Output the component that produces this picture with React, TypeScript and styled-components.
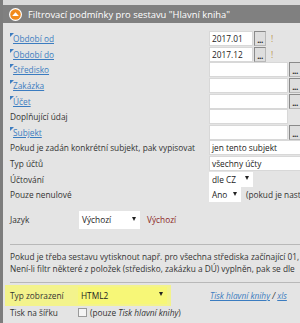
import React from "react";
import styled, { createGlobalStyle } from "styled-components";

const Global = createGlobalStyle`
  html, body { margin: 0; padding: 0; background: #e4e4e4; }
  body { font-family: "Open Sans", "DejaVu Sans", sans-serif; font-size: 8.3px; color: #333; overflow: hidden; }
`;

const Frame = styled.div`
  width: 300px;
  height: 323px;
  box-sizing: border-box;
  border-left: 3px solid #7d7d7d;
  padding-top: 5px;
  background: #e4e4e4;
  overflow: hidden;
  position: relative;
`;

const TopStrip = styled.div`
  position: absolute;
  top: 0; left: -3px; right: 0; height: 5px;
  background: #d9d9d9;
`;

const Header = styled.div`
  height: 18px;
  background: #808080;
  display: flex;
  align-items: center;
  gap: 6px;
  padding-left: 6px;
  color: #fff;
  font-size: 9.4px;
  white-space: nowrap;
`;

const Body = styled.div`
  padding: 8px 0 0 7px;
`;

const Grid = styled.div`
  display: grid;
  grid-template-columns: 199px 1fr;
  grid-auto-rows: 15.6px;
  align-items: center;
`;

const Label = styled.div`
  white-space: nowrap;
  line-height: 15px;
`;

const LinkLabel = styled.a`
  position: relative;
  color: #3b7cc0;
  text-decoration: underline;
  margin-left: 3px;
  &::before {
    content: "";
    position: absolute;
    left: -3px;
    top: 0px;
    width: 0; height: 0;
    border-top: 4px solid #3b7cc0;
    border-right: 4px solid transparent;
  }
`;

const Cell = styled.div`
  display: flex;
  align-items: center;
  gap: 1px;
  white-space: nowrap;
  height: 100%;
`;

const Input = styled.div<{ w: number }>`
  width: ${(p) => p.w}px;
  height: 15px;
  background: #fff;
  border: 1px solid #d8d8d8;
  box-sizing: border-box;
  padding-left: 2px;
  line-height: 13px;
  color: #222;
  flex: none;
`;

const Dots = styled.div`
  width: 12px;
  height: 15px;
  box-sizing: border-box;
  border: 1px solid #8a8a8a;
  border-right-color: #b8b8b8;
  border-bottom-color: #b8b8b8;
  background: #dedede;
  font-size: 8px;
  line-height: 16px;
  text-align: center;
  color: #222;
  flex: none;
  letter-spacing: -0.5px;
  font-weight: bold;
`;

const Bang = styled.span`
  color: #b9904a;
  margin-left: 4px;
`;

const Select = styled.div<{ w: number; h?: number; bg?: string }>`
  width: ${(p) => p.w}px;
  height: ${(p) => p.h ?? 15}px;
  background: ${(p) => p.bg ?? "#fff"};
  box-sizing: border-box;
  display: flex;
  align-items: center;
  justify-content: space-between;
  padding: 0 4px 0 3px;
  color: #222;
  flex: none;
  &::after {
    content: "";
    border-top: 4px solid #222;
    border-left: 2px solid transparent;
    border-right: 2px solid transparent;
    margin-top: -2px;
  }
`;

const Note = styled.span`
  margin-left: 4px;
  color: #333;
`;

const LangRow = styled.div`
  display: flex;
  align-items: center;
  margin-top: 8px;
  height: 18px;
`;

const LangLabel = styled.div`
  width: 69px;
`;

const RedText = styled.span`
  color: #8b1f1f;
  margin-left: 7px;
`;

const Spacer = styled.div`
  height: 15px;
`;

const Rule = styled.div`
  height: 1px;
  background: #b8b8b8;
`;

const Info = styled.div`
  padding: 6px 0 7px;
  line-height: 12px;
  white-space: nowrap;
`;

const TypRow = styled.div`
  display: flex;
  align-items: center;
  height: 21px;
  margin-top: 2px;
`;

const Highlight = styled.div`
  display: flex;
  align-items: center;
  background: #f3f38c;
  margin-left: -5px;
  padding-left: 5px;
  height: 21px;
  width: 166px;
  box-sizing: border-box;
`;

const TypLabel = styled.div`
  width: 68px;
  flex: none;
`;

const PrintLinks = styled.div`
  margin-left: 39px;
  color: #333;
  font-style: italic;
  white-space: nowrap;
  a { color: #3b7cc0; text-decoration: underline; }
`;

const WideRow = styled.div`
  display: flex;
  align-items: center;
  height: 14px;
  white-space: nowrap;
`;

const Check = styled.span`
  width: 9px;
  height: 9px;
  border: 1px solid #9a9a9a;
  background: #f4f4f4;
  box-sizing: border-box;
  display: inline-block;
  margin-right: 3px;
  flex: none;
`;

const HeaderIcon = () => (
  <svg width="13" height="13" viewBox="0 0 13 13">
    <circle cx="6.5" cy="6.5" r="6.5" fill="#fff" />
    <circle cx="6.5" cy="6.5" r="5.3" fill="#f28a1c" />
    <path d="M3.2 8 L6.5 4.3 L9.8 8 Z" fill="#fff" />
  </svg>
);

type Row = { label: string; link?: boolean; value?: string; w?: number; dots?: boolean; bang?: boolean };

const rows: Row[] = [
  { label: "Období od", link: true, value: "2017.01", w: 44, dots: true, bang: true },
  { label: "Období do", link: true, value: "2017.12", w: 44, dots: true, bang: true },
  { label: "Středisko", link: true, value: "", w: 79, dots: true },
  { label: "Zakázka", link: true, value: "", w: 79, dots: true },
  { label: "Účet", link: true, value: "", w: 79, dots: true },
  { label: "Doplňující údaj", value: "", w: 79 },
  { label: "Subjekt", link: true, value: "", w: 79, dots: true },
  { label: "Pokud je zadán konkrétní subjekt, pak vypisovat", value: "jen tento subjekt", w: 100 },
  { label: "Typ účtů", value: "všechny účty", w: 100 },
];

export default function App() {
  return (
    <>
      <Global />
      <Frame>
        <TopStrip />
        <Header>
          <HeaderIcon />
          <span>Filtrovací podmínky pro sestavu "Hlavní kniha"</span>
        </Header>
        <Body>
          <Grid>
            {rows.map((r) => (
              <React.Fragment key={r.label}>
                <Label>{r.link ? <LinkLabel>{r.label}</LinkLabel> : r.label}</Label>
                <Cell>
                  <Input w={r.w!}>{r.value}</Input>
                  {r.dots && <Dots>...</Dots>}
                  {r.bang && <Bang>!</Bang>}
                </Cell>
              </React.Fragment>
            ))}
            <Label>Účtování</Label>
            <Cell>
              <Select w={44}>dle CZ</Select>
            </Cell>
            <Label>Pouze nenulové</Label>
            <Cell>
              <Select w={32}>Ano</Select>
              <Note>(pokud je nastaveno</Note>
            </Cell>
          </Grid>
          <LangRow>
            <LangLabel>Jazyk</LangLabel>
            <Select w={61} h={18}>Výchozí</Select>
            <RedText>Výchozí</RedText>
          </LangRow>
          <Spacer />
          <Rule />
          <Info>
            Pokud je třeba sestavu vytisknout např. pro všechna střediska začínající 01,
            <br />
            Není-li filtr některé z položek (středisko, zakázku a DÚ) vyplněn, pak se dle
          </Info>
          <Rule />
          <TypRow>
            <Highlight>
              <TypLabel>Typ zobrazení</TypLabel>
              <Select w={89} h={17} bg="#f7f777">HTML2</Select>
            </Highlight>
            <PrintLinks>
              <a>Tisk hlavní knihy</a> / <a>xls</a>
            </PrintLinks>
          </TypRow>
          <WideRow>
            <TypLabel>Tisk na šířku</TypLabel>
            <Check />
            <span>
              (pouze <i>Tisk hlavní knihy</i>)
            </span>
          </WideRow>
        </Body>
      </Frame>
    </>
  );
}
